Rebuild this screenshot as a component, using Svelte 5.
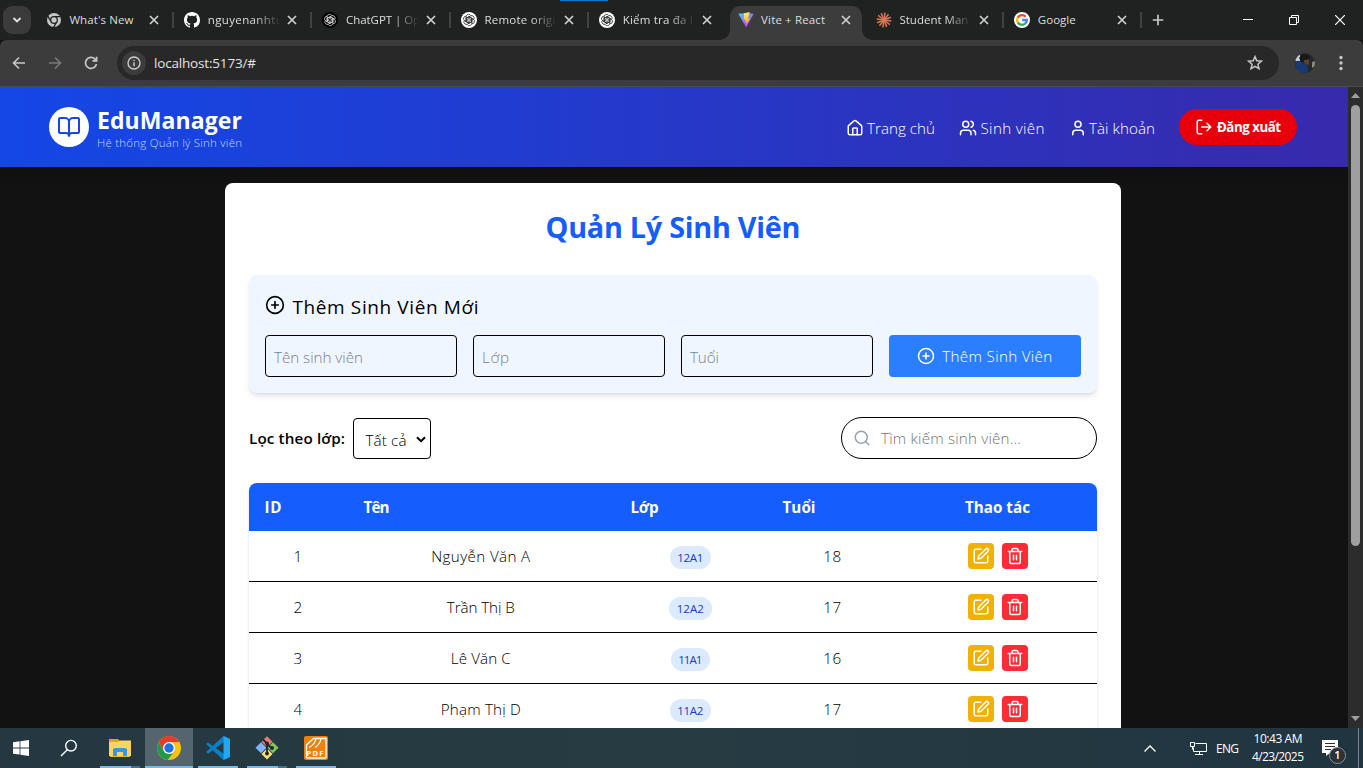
<script>
  const tabs = [
    { icon: 'chrome', title: "What's New", w: 64 },
    { icon: 'github', title: 'nguyenanhtu', w: 75, fade: true },
    { icon: 'gptDark', title: 'ChatGPT | Op', w: 74, fade: true },
    { icon: 'gpt', title: 'Remote origi', w: 71, fade: true },
    { icon: 'gpt', title: 'Kiểm tra đa l', w: 70, fade: true },
    { icon: 'vite', title: 'Vite + React', w: 64, active: true },
    { icon: 'claude', title: 'Student Man', w: 69, fade: true },
    { icon: 'google', title: 'Google', w: 38 }
  ];
  const columns = ['ID', 'Tên', 'Lớp', 'Tuổi', 'Thao tác'];
  const columnWidths = [17, 26, 28, 33, 65];
  const students = [
    { id: 1, name: 'Nguyễn Văn A', w: 99, cls: '12A1', bw: 41, cw: 26, age: 18 },
    { id: 2, name: 'Trần Thị B', w: 68, cls: '12A2', bw: 43, cw: 27, age: 17 },
    { id: 3, name: 'Lê Văn C', w: 60, cls: '11A1', bw: 39, cw: 24, age: 16 },
    { id: 4, name: 'Phạm Thị D', w: 80, cls: '11A2', bw: 41, cw: 26, age: 17 }
  ];
  const rays = Array.from({ length: 12 }, (_, i) => i * 30 + 8);
  const petals = [0, 60, 120, 180, 240, 300];

  // Spreads or tightens the letters so that a label spans the given width.
  function fit(node, width) {
    const natural = node.getBoundingClientRect().width;
    const gaps = node.textContent.length - 1;
    const spacing = (width - natural) / gaps;
    node.style.letterSpacing = `${spacing}px`;
    node.style.marginRight = `${-spacing}px`;
  }
</script>

{#snippet lucide(name, size)}
  <svg class="line" width={size} height={size} viewBox="0 0 24 24">
    {#if name === 'book'}
      <path d="M12 7v14M3 18a1 1 0 0 1-1-1V4a1 1 0 0 1 1-1h5a4 4 0 0 1 4 4 4 4 0 0 1 4-4h5a1 1 0 0 1 1 1v13a1 1 0 0 1-1 1h-6a3 3 0 0 0-3 3 3 3 0 0 0-3-3z" />
    {:else if name === 'home'}
      <path d="M15 21v-8a1 1 0 0 0-1-1h-4a1 1 0 0 0-1 1v8" />
      <path d="M3 10a2 2 0 0 1 .709-1.528l7-5.999a2 2 0 0 1 2.582 0l7 5.999A2 2 0 0 1 21 10v9a2 2 0 0 1-2 2H5a2 2 0 0 1-2-2z" />
    {:else if name === 'users'}
      <path d="M16 21v-2a4 4 0 0 0-4-4H6a4 4 0 0 0-4 4v2M22 21v-2a4 4 0 0 0-3-3.87M16 3.13a4 4 0 0 1 0 7.75" />
      <circle cx="9" cy="7" r="4" />
    {:else if name === 'user'}
      <path d="M19 21v-2a4 4 0 0 0-4-4H9a4 4 0 0 0-4 4v2" />
      <circle cx="12" cy="7" r="4" />
    {:else if name === 'logout'}
      <path d="M9 21H5a2 2 0 0 1-2-2V5a2 2 0 0 1 2-2h4M16 17l5-5-5-5M21 12H9" />
    {:else if name === 'plus'}
      <circle cx="12" cy="12" r="10" />
      <path d="M8 12h8M12 8v8" />
    {:else if name === 'search'}
      <circle cx="11" cy="11" r="8" />
      <path d="m21 21-4.3-4.3" />
    {:else if name === 'edit'}
      <path d="M12 3H5a2 2 0 0 0-2 2v14a2 2 0 0 0 2 2h14a2 2 0 0 0 2-2v-7" />
      <path d="M18.375 2.625a1 1 0 0 1 3 3l-9.013 9.014a2 2 0 0 1-.853.505l-2.873.84a.5.5 0 0 1-.62-.62l.84-2.873a2 2 0 0 1 .506-.852z" />
    {:else if name === 'trash'}
      <path d="M3 6h18M19 6v14c0 1-1 2-2 2H7c-1 0-2-1-2-2V6M8 6V4c0-1 1-2 2-2h4c1 0 2 1 2 2v2M10 11v6M14 11v6" />
    {/if}
  </svg>
{/snippet}

{#snippet favicon(name)}
  <svg width="16" height="16" viewBox="0 0 16 16">
    {#if name === 'chrome'}
      <circle cx="8" cy="8" r="7" fill="#c7c7c7" />
      <path d="M8 4.6h6.4M5 9.7 1.8 4.2M10.9 9.7 7.7 15.2" stroke="#202221" stroke-width="1.3" />
      <circle cx="8" cy="8" r="3.3" fill="#c7c7c7" stroke="#202221" stroke-width="1.3" />
    {:else if name === 'github'}
      <path fill="#fff" d="M8 0C3.58 0 0 3.58 0 8c0 3.54 2.29 6.53 5.47 7.59.4.07.55-.17.55-.38v-1.49c-2.01.37-2.53-.49-2.69-.94-.09-.23-.48-.94-.82-1.13-.28-.15-.68-.52-.01-.53.63-.01 1.08.58 1.23.82.72 1.21 1.87.87 2.33.66.07-.52.28-.87.51-1.07-1.78-.2-3.64-.89-3.64-3.95 0-.87.31-1.59.82-2.15-.08-.2-.36-1.02.08-2.12 0 0 .67-.21 2.2.82a7.6 7.6 0 0 1 4 0c1.53-1.04 2.2-.82 2.2-.82.44 1.1.16 1.92.08 2.12.51.56.82 1.27.82 2.15 0 3.07-1.87 3.75-3.65 3.95.29.25.54.73.54 1.48v2.2c0 .21.15.46.55.38A8.01 8.01 0 0 0 16 8c0-4.42-3.58-8-8-8z" />
    {:else if name === 'gpt' || name === 'gptDark'}
      <circle cx="8" cy="8" r="8" fill={name === 'gpt' ? '#fff' : '#000'} />
      <g fill="none" stroke={name === 'gpt' ? '#333' : '#ccc'} stroke-width=".8">
        {#each petals as a}
          <path transform="rotate({a} 8 8)" d="M5.2 9.700V4.800a2.500 2.500 0 0 1 4.700-1.200M5.200 6.400 8 4.800l3.700 2.100M6.700 7.200 8 6.500" />
        {/each}
      </g>
    {:else if name === 'vite'}
      <defs>
        <linearGradient id="vite-a" x1="0" y1="0" x2=".6" y2="1"><stop offset="0" stop-color="#41d1ff" /><stop offset="1" stop-color="#bd34fe" /></linearGradient>
        <linearGradient id="vite-b" x1=".3" y1="0" x2=".6" y2="1"><stop offset="0" stop-color="#ffea83" /><stop offset="1" stop-color="#ffa800" /></linearGradient>
      </defs>
      <path d="M.3 1.8 8 .9l7.700.9L8.200 15.400z" fill="url(#vite-a)" />
      <path d="M11.700.1 6.100 1.200 5.700 7.600l2-.4-.6 3 1.600-.5-.8 3.600 4.300-7-2.100.4z" fill="url(#vite-b)" />
    {:else if name === 'claude'}
      <g stroke="#d97757" stroke-width="1.5">
        {#each rays as a}
          <path transform="rotate({a} 8 8)" d="M8 8V.6" />
        {/each}
      </g>
    {:else if name === 'google'}
      <circle cx="8" cy="8" r="8" fill="#fff" />
      <g fill="none" stroke-width="2.3">
        <path d="M11.6 4.7A4.8 4.8 0 0 0 3.8 5.6" stroke="#ea4335" />
        <path d="M3.8 5.6a4.8 4.8 0 0 0 0 4.8" stroke="#fbbc05" />
        <path d="M3.8 10.4a4.8 4.8 0 0 0 7.3 1.2" stroke="#34a853" />
        <path d="M11.1 11.6A4.6 4.6 0 0 0 12.8 8H8.2" stroke="#4285f4" />
      </g>
    {/if}
  </svg>
{/snippet}

<div class="screen">
  <div class="strip">
    <button class="chevron" aria-label="tabs"><svg width="10" height="8" viewBox="0 0 10 8"><path d="m1.5 2 3.5 3.5L8.500 2" fill="none" stroke="#e3e3e3" stroke-width="1.8" /></svg></button>
    <div class="tabs">
      {#each tabs as tab, i}
        <div class="tab" class:active={tab.active} class:plain={tab.active || tabs[i + 1]?.active}>
          {@render favicon(tab.icon)}
          <div class="title" class:fade={tab.fade}><span use:fit={tab.w}>{tab.title}</span></div>
          <svg class="x" width="10" height="10" viewBox="0 0 10 10"><path d="m1 1 8 8M9 1 1 9" stroke="#d0d0d0" stroke-width="1.7" /></svg>
        </div>
      {/each}
    </div>
    <svg class="new" width="12" height="12" viewBox="0 0 12 12"><path d="M6 .7v10.600M.7 6h10.600" stroke="#c7c7c7" stroke-width="1.7" /></svg>
    <div class="controls">
      <svg width="10" height="10"><path d="M0 4.500h10" stroke="#fff" /></svg>
      <svg width="10" height="10" fill="none" stroke="#fff"><path d="M.5 2.500h7v7h-7zM2.500 2.500v-2h7v7h-2" /></svg>
      <svg width="10" height="10"><path d="m0 0 10 10M10 0 0 10" stroke="#fff" stroke-width="1.200" /></svg>
    </div>
    <i class="loading"></i>
  </div>

  <div class="toolbar">
    <svg width="14" height="14" viewBox="0 0 14 14" fill="none" stroke="#c7c7c7" stroke-width="1.600"><path d="M13 7H2M7 1.500 1.500 7 7 12.500" /></svg>
    <svg width="14" height="14" viewBox="0 0 14 14" fill="none" stroke="#7a7a7a" stroke-width="1.600"><path d="M1 7h11M7 1.500 12.500 7 7 12.500" /></svg>
    <svg width="14" height="14" viewBox="0 0 14 14" fill="none" stroke="#c7c7c7" stroke-width="1.700"><path d="M12.400 8A5.500 5.500 0 1 1 11 3.100l1.300 1.300" /><path d="M12.600.8v4H8.500" /></svg>
    <div class="address">
      <span class="info"><svg width="14" height="14" viewBox="0 0 14 14"><circle cx="7" cy="7" r="6" fill="none" stroke="#d0d0d0" stroke-width="1.300" /><path d="M7 6.200v4M7 3.700v1.400" stroke="#d0d0d0" stroke-width="1.400" /></svg></span>
      <span class="url"><span use:fit={102}>localhost:5173/#</span></span>
      <svg class="star" width="16" height="16" viewBox="0 0 16 16"><path d="m8 1.600 1.800 4.200 4.600.4-3.500 3 1.100 4.500L8 11.300l-4 2.400 1.100-4.500-3.500-3 4.600-.4z" fill="none" stroke="#c7c7c7" stroke-width="1.500" /></svg>
    </div>
    <svg class="avatar" width="20" height="20" viewBox="0 0 20 20">
      <defs><clipPath id="av"><circle cx="10" cy="10" r="10" /></clipPath></defs>
      <g clip-path="url(#av)">
        <rect width="20" height="20" fill="#26292c" />
        <path d="M0 2h5v6H0z" fill="#cfd2dc" />
        <path d="M0 9q5-3 8 1l4 2 1 8H2z" fill="#173a75" />
        <path d="M8 5q4-2 6 1v6l-4-1z" fill="#5b4330" />
        <path d="m17 9 3-1v5l-3 2z" fill="#8f8a80" />
        <path d="M4 5q4-6 10-3l1 4-6 1-2 3z" fill="#17191b" />
      </g>
    </svg>
    <svg class="dots" width="4" height="16" viewBox="0 0 4 16" fill="#c7c7c7"><circle cx="2" cy="2.500" r="1.700" /><circle cx="2" cy="8" r="1.700" /><circle cx="2" cy="13.500" r="1.700" /></svg>
  </div>

  <div class="view">
    <div class="page">
      <header>
        <span class="logo">{@render lucide('book', 24)}</span>
        <div class="brand">
          <h1><span use:fit={145}>EduManager</span></h1>
          <p><span use:fit={145}>Hệ thống Quản lý Sinh viên</span></p>
        </div>
        <nav>
          <a href="#home" class="n1">{@render lucide('home', 18)}<span use:fit={68}>Trang chủ</span></a>
          <a href="#students" class="n2">{@render lucide('users', 18)}<span use:fit={64}>Sinh viên</span></a>
          <a href="#account" class="n3">{@render lucide('user', 18)}<span use:fit={66}>Tài khoản</span></a>
          <button class="logout">{@render lucide('logout', 18)}<span use:fit={64}>Đăng xuất</span></button>
        </nav>
      </header>

      <main>
        <h2><span use:fit={255}>Quản Lý Sinh Viên</span></h2>
        <section class="form">
          <h3>{@render lucide('plus', 20)}<span use:fit={186}>Thêm Sinh Viên Mới</span></h3>
          <div class="fields">
            <div class="field"><span use:fit={89}>Tên sinh viên</span></div>
            <div class="field"><span use:fit={27}>Lớp</span></div>
            <div class="field"><span use:fit={29}>Tuổi</span></div>
            <button class="add">{@render lucide('plus', 18)}<span use:fit={110}>Thêm Sinh Viên</span></button>
          </div>
        </section>

        <div class="filters">
          <b><span use:fit={96}>Lọc theo lớp:</span></b>
          <div class="select"><span use:fit={41}>Tất cả</span><svg width="10" height="7" viewBox="0 0 10 7"><path d="m1 1.200 4 4 4-4" fill="none" stroke="#000" stroke-width="2" /></svg></div>
          <div class="search">{@render lucide('search', 18)}<span use:fit={140}>Tìm kiếm sinh viên...</span></div>
        </div>

        <div class="table">
          <div class="row head">
            {#each columns as c, i}<div><span use:fit={columnWidths[i]}>{c}</span></div>{/each}
          </div>
          {#each students as s}
            <div class="row">
              <div>{s.id}</div>
              <div><span use:fit={s.w}>{s.name}</span></div>
              <div><span class="badge" style="width:{s.bw}px"><span use:fit={s.cw}>{s.cls}</span></span></div>
              <div><span use:fit={18}>{s.age}</span></div>
              <div class="actions">
                <button class="edit" aria-label="edit">{@render lucide('edit', 18)}</button>
                <button class="del" aria-label="delete">{@render lucide('trash', 18)}</button>
              </div>
            </div>
          {/each}
        </div>
      </main>
    </div>
    <div class="scroll">
      <svg width="9" height="5"><path d="M0 5h9L4.500 0z" fill="#9f9f9f" /></svg>
      <i></i>
      <svg width="9" height="5"><path d="M0 0h9L4.500 5z" fill="#9f9f9f" /></svg>
    </div>
  </div>

  <div class="taskbar">
    <div class="task start"><svg width="16" height="16" viewBox="0 0 16 16" fill="#fff"><path d="M0 2.200 6.600 1.300v6.200H0zM7.400 1.200 16 0v7.500H7.400zM0 8.400h6.600v6.200L0 13.700zM7.400 8.400H16V16l-8.600-1.200z" /></svg></div>
    <div class="task find"><svg width="18" height="18" viewBox="0 0 18 18" fill="none" stroke="#fff" stroke-width="1.400"><circle cx="11" cy="6.700" r="5.300" /><path d="M7.300 10.700 1 17" /></svg></div>
    <div class="task open multi">
      <svg width="22" height="20" viewBox="0 0 22 20"><path d="M0 1h9l2 2h10v15H0z" fill="#e5a50e" /><path d="M0 4h9l2-1.500h11V18H0z" fill="#fcd462" /><path d="M4 18v-7l2-1h10l2 1v7h-4v-4H8v4z" fill="#3a96dd" /><path d="M1 18.500h20" stroke="#e8b93c" /></svg>
    </div>
    <div class="task open current">
      <svg width="24" height="24" viewBox="0 0 24 24"><circle cx="12" cy="12" r="12" fill="#fbc116" /><path d="M1.600 6A12 12 0 0 1 22.400 6H12l-5.200 9z" fill="#e33b2e" /><path d="M6.800 15 12 18l4-1-5.300 6.900A12 12 0 0 1 1.600 6z" fill="#229a48" /><circle cx="12" cy="12" r="6" fill="#fff" /><circle cx="12" cy="12" r="4.700" fill="#1a73e8" /></svg>
    </div>
    <div class="task open">
      <svg width="24" height="24" viewBox="0 0 24 24"><path d="M17.500 0 24 3v18l-6.500 3L1.600 9.500 0 8l2-1.600L18 18V6L2 17.700.2 16l1.500-1.600z" fill="#0d7fc4" /><path d="M17.500 0 24 3v18l-6.500 3z" fill="#26a5f0" /></svg>
    </div>
    <div class="task open multi">
      <svg width="24" height="24" viewBox="0 0 24 24"><path d="M12 .2 17.500 5.700 12 11.200 6.500 5.700z" fill="#f27b77" /><path d="m6 6.300 5.500 5.500L6 17.300.5 11.800z" fill="#80b3ff" /><path d="m18 6.300 5.500 5.500-5.500 5.500-5.500-5.500z" fill="#7dcb5b" /><path d="m12 12.500 5.500 5.500-5.500 5.500L6.500 18z" fill="#ffe17a" /><path d="m8 3.500 4 4V17M12 8l4.500 4" stroke="#20292c" stroke-width="1.800" fill="none" /><circle cx="12" cy="7.500" r="2" fill="#20292c" /><circle cx="12" cy="17.500" r="2" fill="#20292c" /><circle cx="17" cy="12" r="2" fill="#20292c" /></svg>
    </div>
    <div class="task open">
      <div class="pdf"><svg width="24" height="24" viewBox="0 0 24 24" fill="none" stroke="#fff" stroke-width="1.300"><path d="M2.500 22V9l7-6.500H12q-1 6-7 9M22 22V2.500h-5q-1 6-6 9M2.500 22H22M12 2.500h5" /></svg><span use:fit={17}>PDF</span></div>
    </div>
    <div class="tray">
      <svg width="12" height="7" viewBox="0 0 12 7"><path d="m.5 6.500 5.500-5.500 5.500 5.500" fill="none" stroke="#fff" stroke-width="1.300" /></svg>
      <svg class="net" width="17" height="14" viewBox="0 0 17 14" fill="none" stroke="#fff"><path d="M5.500 1.500h11v8H3.500v-4M9.500 9.500v3M5 12.500h8M.5.500h4v4h-4zM2.500 4.500v3" /></svg>
      <span class="lang"><span use:fit={23}>ENG</span></span>
      <div class="clock"><p><span use:fit={49}>10:43 AM</span></p><p><span use:fit={52}>4/23/2025</span></p></div>
      <div class="note">
        <svg width="16" height="16" viewBox="0 0 16 16"><path d="M0 0h16v13H8l-4 3v-3H0z" fill="#fff" /><path d="M3 3.500h10M3 6.500h10M3 9.500h6" stroke="#233640" /></svg>
        <b>1</b>
      </div>
    </div>
    <i class="peek"></i>
  </div>
</div>

<style>
  :global(body) { margin: 0; background: #121212; }
  * { box-sizing: border-box; }
  h1, h2, h3, p { margin: 0; }
  svg { flex: none; display: block; }
  button { border: 0; padding: 0; font: inherit; color: inherit; }
  .line { fill: none; stroke: currentColor; stroke-width: 2; stroke-linecap: round; stroke-linejoin: round; }
  .screen { width: 1363px; height: 768px; overflow: hidden; display: flex; flex-direction: column; font-family: "Open Sans", "Noto Sans", sans-serif; white-space: nowrap; }
  span { display: inline-block; }

  .strip { position: relative; height: 40px; flex: none; background: #202221; display: flex; align-items: center; }
  .chevron { width: 28px; height: 28px; margin: 0 4.200px 0 3px; border-radius: 9px; background: #3b3b3b; display: grid; place-items: center; }
  .tabs { display: flex; height: 40px; }
  .tab { position: relative; width: 138.350px; display: flex; align-items: center; padding-left: 10.600px; color: #dedede; font-size: 11.500px; }
  .tab::after { content: ""; position: absolute; right: -.5px; top: 12px; width: 2px; height: 16px; background: #414242; }
  .plain::after { display: none; }
  .title { width: 76px; margin-left: 7.600px; line-height: 20px; }
  .fade { -webkit-mask-image: linear-gradient(90deg, #000 62%, transparent 96%); mask-image: linear-gradient(90deg, #000 62%, transparent 96%); }
  .x { margin-left: 3.600px; }
  .active > * { z-index: 1; }
  .active { z-index: 1; }
  .active::before { content: ""; position: absolute; left: 3px; right: 3px; top: 6px; bottom: 0; background: #3c3c3c; border-radius: 10px 10px 0 0; }
  .active::after { display: block; left: -7px; right: -7px; top: auto; bottom: 0; width: auto; height: 10px; background: radial-gradient(circle at 0 0, transparent 9.500px, #3c3c3c 10px) left / 10px 10px no-repeat, radial-gradient(circle at 100% 0, transparent 9.500px, #3c3c3c 10px) right / 10px 10px no-repeat; }
  .new { margin-left: 9.800px; }
  .controls { display: flex; gap: 36px; margin-left: auto; margin-right: 18px; }
  .loading { position: absolute; left: 560px; top: 0; width: 48px; height: 1px; background: #0078d7; }

  .toolbar { height: 47px; flex: none; background: #3c3c3c; border-bottom: 1px solid #4a4a4a; display: flex; align-items: center; padding-left: 12px; gap: 22px; border-radius: 6px 6px 0 0; }
  .address { width: 1162px; height: 34px; margin-left: -3px; border-radius: 17px; background: #282828; display: flex; align-items: center; padding: 0 16px 0 5px; }
  .info { width: 24px; height: 24px; border-radius: 50%; background: #3c3c3c; display: grid; place-items: center; }
  .url { margin-left: 8px; color: #e3e3e3; font-size: 13.500px; line-height: 20px; }
  .star { margin-left: auto; }
  .avatar { margin-left: -6px; }
  .dots { margin-left: 2px; }

  .view { flex: 1; min-height: 0; display: flex; background: #121212; }
  .page { width: 1348px; overflow: hidden; font-size: 15.200px; font-weight: 350; color: #000; }
  header { height: 80px; display: flex; align-items: center; padding: 0 51px 0 49px; background: linear-gradient(90deg, #1447e6, #372aac); color: #fff; box-shadow: 0 6px 12px rgba(0, 0, 0, .15); }
  .logo { width: 40px; height: 40px; border-radius: 50%; background: #fff; color: #1447e6; display: grid; place-items: center; margin-right: 8px; }
  .brand { height: 46px; }
  h1 { font-size: 23px; line-height: 32px; font-weight: 750; }
  .brand p { font-size: 11.500px; line-height: 14px; color: #bedbff; }
  nav { margin-left: auto; display: flex; align-items: center; }
  nav a { display: flex; align-items: center; color: #fff; text-decoration: none; gap: 3.500px; line-height: 22px; padding-top: 1px; }
  .n1, .n2 { margin-right: 24px; }
  .n3 { margin-right: 24px; gap: 2.500px; }
  .logout { width: 118px; height: 36px; border-radius: 18px; background: #e7000b; display: flex; align-items: center; justify-content: center; gap: 4px; font-size: 13.300px; font-weight: 700; }

  main { width: 896px; height: 700px; margin: 16px 0 0 225px; padding: 24px; border-radius: 8px; background: #fff; }
  h2 { text-align: center; font-size: 28.800px; line-height: 40px; font-weight: 700; color: #155dfc; margin-bottom: 28px; }
  .form { height: 118px; border-radius: 8px; padding: 16px; background: #eff6ff; box-shadow: 0 4px 6px -1px rgba(0, 0, 0, .1), 0 2px 4px -2px rgba(0, 0, 0, .1); }
  h3 { height: 28px; display: flex; gap: 7.500px; font-size: 19px; line-height: 32px; font-weight: 500; margin-bottom: 16px; }
  h3 > svg { margin-top: 4px; }
  .fields { display: grid; grid-template-columns: repeat(4, 192px); gap: 16px; }
  .field { height: 42px; border: 1px solid #000; border-radius: 4px; padding: 0 8px; line-height: 42px; color: #7b7f86; }
  .add { background: #2b7fff; color: #fff; border-radius: 4px; display: flex; align-items: center; justify-content: center; gap: 7.500px; padding-right: 1px; }
  .filters { display: flex; align-items: center; height: 42px; margin: 24px 0; }
  b { font-weight: 600; }
  .select { width: 78px; height: 41px; margin: 1px 0 0 8px; border: 1px solid #000; border-radius: 4px; padding: 2px 4px 0 11.500px; display: flex; align-items: center; justify-content: space-between; }
  .search { width: 256px; height: 42px; margin-left: auto; border: 1px solid #000; border-radius: 21px; padding-left: 11px; display: flex; align-items: center; gap: 10px; color: #757575; }
  .search .line { color: #99a1af; }

  .table { border-radius: 8px 8px 0 0; overflow: hidden; box-shadow: 0 1px 3px rgba(0, 0, 0, .15); }
  .row { display: grid; grid-template-columns: 99px 267px 152px 132px 198px; height: 51px; border-bottom: 1px solid #000; align-items: center; text-align: center; }
  .row > div { padding-right: 1.500px; }
  .row > .actions { padding-right: 0; }
  .head { height: 48px; border: 0; background: #155dfc; color: #fff; font-weight: 700; text-align: left; }
  .head > div { padding-left: 15.500px; }
  .head > div:last-child { padding: 0 1px 0 0; text-align: center; }
  .badge { height: 23px; margin-top: 3px; border-radius: 12px; background: #dbeafe; color: #193cb8; font-size: 11.500px; line-height: 23px; font-weight: 500; vertical-align: middle; }
  .actions { display: flex; gap: 8px; justify-content: center; }
  .actions button { width: 26px; height: 26px; border-radius: 4px; color: #fff; display: grid; place-items: center; }
  .edit { background: #f0b100; }
  .del { background: #fb2c36; }

  .scroll { width: 15px; background: #2c2c2c; display: flex; flex-direction: column; align-items: center; padding: 6px 0 7px; }
  .scroll i { width: 9px; height: 441px; margin: 7px 0 auto; border-radius: 5px; background: #9f9f9f; }

  .taskbar { height: 40px; flex: none; background: linear-gradient(90deg, #253841, #263b42 50%, #213541); display: flex; color: #fff; position: relative; }
  .task { position: relative; width: 49px; height: 40px; display: grid; place-items: center; }
  .start { width: 42px; margin-right: 3px; }
  .find { margin-right: 1px; padding-right: 1px; }
  .open::after { content: ""; position: absolute; left: 5px; width: 40px; bottom: 0; height: 2px; background: #76b9ed; }
  .multi::after { background: linear-gradient(90deg, #76b9ed 31px, #456f8f 31px); }
  .current { background: linear-gradient(#55656d, #55656d) 1px 0 / 48px 100% no-repeat; }
  .current::after { left: 1px; width: 48px; }
  .pdf { position: relative; width: 24px; height: 24px; border-radius: 2px; background: #ef8109; }
  .pdf span { position: absolute; left: 3px; bottom: 3px; background: #ef8109; font: 700 7.500px/8px "Open Sans", sans-serif; }
  .tray { margin-left: auto; margin-right: 10px; display: flex; align-items: center; font-size: 12px; }
  .net { margin-left: 34px; margin-top: 2px; }
  .lang { margin-left: 9px; }
  .clock { width: 52px; margin-left: 13px; line-height: 18px; text-align: center; }
  .note { position: relative; margin-left: 18px; width: 31px; height: 16px; }
  .note b { position: absolute; left: 7px; top: 7px; width: 17px; height: 17px; border-radius: 50%; border: 1px solid #87919a; background: #2c3236; font-size: 11px; line-height: 14px; text-align: center; }
  .peek { position: absolute; right: 4px; top: 0; height: 40px; width: 1px; background: #7b878e; }
</style>
